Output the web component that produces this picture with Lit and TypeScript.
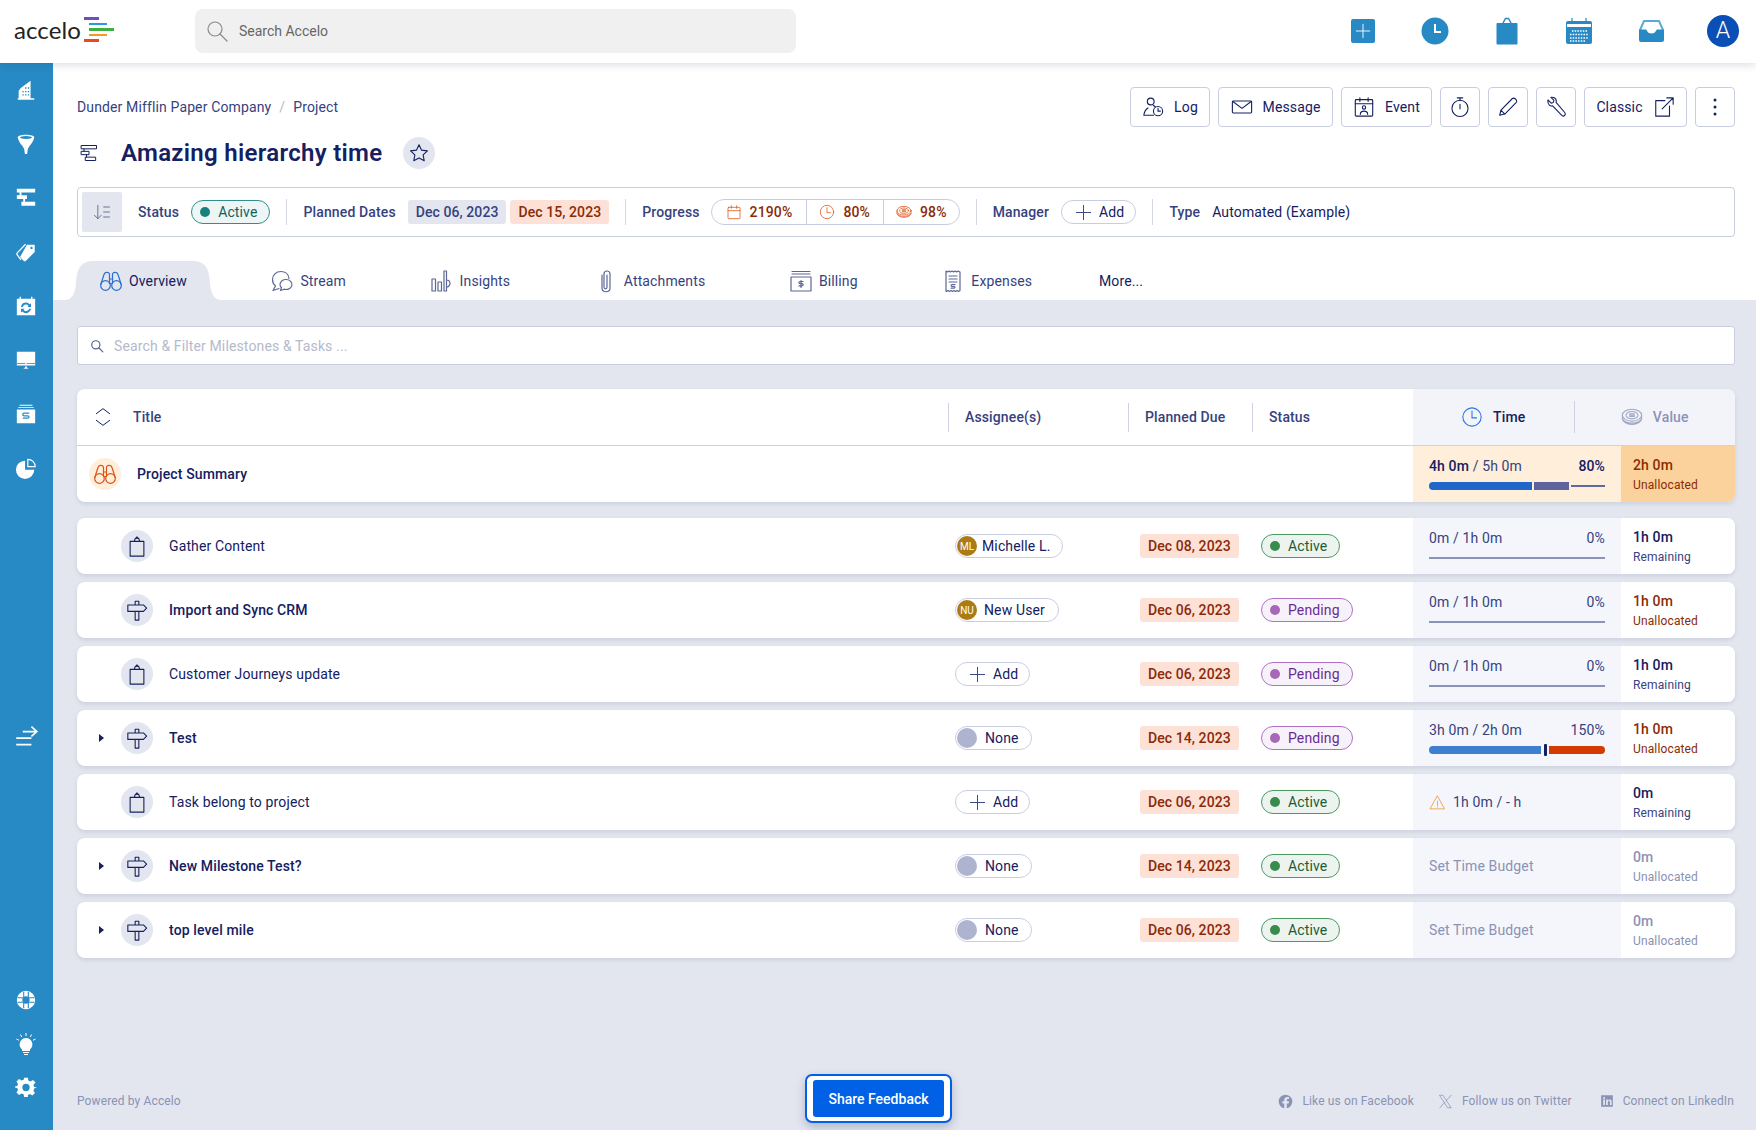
import { LitElement, html, css, svg } from "lit";
import { customElement } from "lit/decorators.js";

const ic = (body: unknown, size = 24, cls = "", w = size) =>
  html`<svg class="ic ${cls}" width="${w}" height="${size}" viewBox="0 0 24 24" fill="none" stroke="currentColor" stroke-width="1.2" stroke-linecap="round" stroke-linejoin="round">${body}</svg>`;
const fill = (body: unknown, size = 24) =>
  html`<svg class="ic" width="${size}" height="${size}" viewBox="0 0 24 24" fill="currentColor" stroke="none">${body}</svg>`;

const I = {
  binoc: svg`<circle cx="6.5" cy="16.5" r="4.8"/><circle cx="17.5" cy="16.5" r="4.8"/><path d="M1.8 15.5 5 5.5C5.6 3 9.5 2.5 10.5 5V14M22.200 15.500 19 5.500C18.400 3 14.500 2.500 13.500 5V14M10.500 10h3M10.500 14.500h3"/>`,
  task: svg`<path d="M4.500 7h15v16h-15zM9 7l1.200-3.500h3.600L15 7" /><path d="M11 3.500 12 2l1 1.500"/>`,
  ms: svg`<path d="M2 6.500h17l3.500 3.500-3.500 3.500H2zM10 6.500V2.500h4v4M10 13.500V23h4v-9.500"/>`,
  tree: svg`<path d="M3 3h18v4H3zM3 10h9v4H3zM8 17h12v4H8zM6 7v3M9 14v3"/>`,
  star: svg`<path d="m12 3 2.800 5.900 6.400.8-4.700 4.400 1.200 6.400L12 17.400 6.300 20.500l1.200-6.400L2.800 9.700l6.400-.8z"/>`,
  sort: svg`<path d="M7 4v16M3 16l4 4 4-4M14 6h7M14 12h7M14 18h7"/>`,
  cal: svg`<rect x="3" y="5" width="18" height="17" rx="1"/><path d="M3 10h18M8 2.500v4M16 2.500v4"/>`,
  clock: svg`<circle cx="12" cy="12" r="10"/><path d="M12 5.500V13h5"/>`,
  coins: svg`<ellipse cx="12" cy="10" rx="10.500" ry="6.500"/><ellipse cx="12" cy="10" rx="6.500" ry="4"/><path d="M1.500 10v3.500c0 3.500 4.500 6.500 10.500 6.500s10.500-3 10.500-6.500V10M1.800 14.500c1.500 2.500 5 4 10.200 4s8.700-1.500 10.200-4M14.500 8.500h-5v1.500h5v1.500h-5"/>`,
  plus: svg`<path d="M12 3v18M3 12h18"/>`,
  log: svg`<circle cx="9.500" cy="6" r="3.700"/><path d="M2 21c.5-4 2-6.500 4.500-8M2 21h10.500M12.500 10.500c1 .3 1.500.7 2 1.200"/><circle cx="17.500" cy="16.500" r="5"/><path d="M17.500 13.500v3h2.500"/>`,
  mail: svg`<rect x="1.500" y="5.500" width="21" height="13" rx="1"/><path d="m2 6 10 7.500L22 6"/>`,
  event: svg`<rect x="2.500" y="4" width="19" height="18" rx="1"/><path d="M2.500 8.500h19M7.500 2v4M16.500 2v4"/><circle cx="12" cy="12.500" r="1.800"/><path d="M8 20c0-2.500 1.500-3.500 4-3.500s4 1 4 3.500"/>`,
  timer: svg`<circle cx="12" cy="13.500" r="8.800"/><path d="M9 2h6M12 2v3M12 9v5"/>`,
  pencil: svg`<path d="M3 21l1.300-5.500L16.500 3c1-.9 2.300-.9 3.300 0l1 1c.9 1 .9 2.300 0 3.300L8.500 19.700zM4.300 15.500l4.200 4.200"/>`,
  wrench: svg`<path d="M3.500 4.500 6.800 7.800 9 7l.8-2.200L6.500 1.500C9 .8 11.800 2 12.300 5c.1.700 0 1.400-.2 2L21.500 18c1 1.200.9 2.300 0 3.200-.9.900-2.200.9-3.200-.1L8.300 10.700c-2.500.5-5.500-.3-5.200-6.200z"/>`,
  ext: svg`<path d="M13 5H3v17h15V11M10 14 22 2M15 2h7v7"/>`,
  stream: svg`<path d="M19 9.500C18.500 5 15 2.500 11 2.500 6 2.500 2.500 6 2.500 10.500c0 3 1.300 5.200 3 6.500L3 21.500l6-2"/><path d="M10 15.500a6 5 0 1 1 4 4.700L10.500 21.500l1-3c-1-.7-1.500-1.800-1.500-3z"/>`,
  insight: svg`<path d="M2 10h3.500v12H2zM8 13h3.500v9H8zM14 2h2.500v20H14zM16.500 11a3.500 3.500 0 1 1 0 7"/>`,
  clip: svg`<path d="M8 6v13c0 5 8 5 8 0V5c0-4-6-4-6 0v13c0 2.500 3 2.500 3 0V6"/>`,
  bill: svg`<path d="M3 2.500h18M3 5h18"/><rect x="2" y="8" width="20" height="14"/><path d="M14 12.500h-3a1 1 0 0 0 0 2.200h2a1 1 0 0 1 0 2.200h-3M12 11.500v7"/>`,
  exp: svg`<path d="M5 2l1.400 1L8 2l1.400 1L11 2l1.500 1L14 2l1.600 1L17 2l2 1v18.500l-1.500 1-1.500-1-1.500 1-1.500-1-1.500 1-1.500-1-1.500 1-1.500-1-1.500 1L5 22z"/><path d="M8 7h8M8 10h8M8 13h8M14 15.500h-3a.8.8 0 0 0 0 1.800h2a.8.8 0 0 1 0 1.800h-3"/>`,
  search: svg`<circle cx="10" cy="10" r="7"/><path d="m15 15 7 7"/>`,
  chev: svg`<path d="M4 8l8-6 8 6M4 16l8 6 8-6"/>`,
  warn: svg`<path d="M12 3 22 21H2z"/><path d="M12 10v6M12 18v.5"/>`,
};

const SB = {
  building: svg`<path d="M6 10 17 2v19H4V13zM3 21h18v1.500H3z"/><path fill="#278ac4" d="M8 13h1.500v1.500H8zM8 16.500h1.500V18H8zM11 9h1.500v1.500H11zM11 13h1.500v1.500H11zM11 16.500h1.500V18H11zM14 9h1.500v1.500H14zM14 13h1.500v1.500H14zM14 16.500h1.500V18H14z"/>`,
  funnel: svg`<path d="M3 5c0-2 4-3 9-3s9 1 9 3c0 1-2 6-5 9l-2 3.500-.8 5.500h-2.400L10 17.500 8 14C5 11 3 6 3 5z"/><ellipse cx="12" cy="5" rx="6.500" ry="1.600" fill="#278ac4"/>`,
  tree: svg`<path d="M2 2h20v4H2zM2 9h11v4H2zM7 16h15v4.500H7zM5 6h2v3H5zM9 13h2v3H9z"/>`,
  tag: svg`<path d="M13 4h8.500v8L12 21.500c-1 .8-2 .8-2.700 0L5.500 17.500z"/><path d="M11.500 3.500 2.500 13c-.6.700-.6 1.500 0 2.200l4 5.300" fill="none" stroke="#fff" stroke-width="1.400"/><circle cx="18" cy="7.500" r="1.300" fill="#278ac4"/>`,
  cal: svg`<path d="M2 4h3V2h1.500v2h11V2H19v2h3v18H2z"/><path d="M6.500 13a5.500 5.500 0 0 1 9.500-3l1.500-1v4h-4l1.300-1.200a3.600 3.600 0 0 0-6.300 1.200zM17.500 15a5.500 5.500 0 0 1-9.500 3l-1.500 1v-4h4l-1.300 1.200a3.600 3.600 0 0 0 6.300-1.200z" fill="#278ac4"/>`,
  screen: svg`<path d="M2 3h20v15H2zM8.500 21.500c2-.5 2.500-1 2.500-2.500h2c0 1.500.5 2 2.500 2.500z"/><rect x="2" y="15.500" width="20" height=".9" fill="#278ac4"/><rect x="11" y="15.500" width="2" height=".9"/>`,
  bill: svg`<path d="M5 2h14v1H5zM3.500 4.500h17v1h-17zM2 7h20v15H2z"/><path d="M15.500 11H10a1.300 1.300 0 0 0 0 3h4a1.200 1.200 0 0 1 0 2.500H8.500" stroke="#278ac4" stroke-width="1.400" fill="none"/>`,
  pie: svg`<path d="M11 4v10h10a10 10 0 1 1-10-10z"/><path d="M14 2.500a8 8 0 0 1 8 8h-8z" stroke="#fff" stroke-width="1.300" fill="#278ac4"/>`,
  expand: svg`<path d="M9 7h12M3 13h14M3 19h14M17 2.500 22 7l-5 4.500" fill="none" stroke="#fff" stroke-width="1.500"/>`,
  ring: svg`<path fill-rule="evenodd" d="M12 2a10 10 0 1 1 0 20 10 10 0 0 1 0-20zm0 6a4 4 0 1 0 0 8 4 4 0 0 0 0-8z"/><path d="M9.500 3v6M14.500 3v6M9.500 15v6M14.500 15v6M3 9.500h6M3 14.500h6M15 9.500h6M15 14.500h6" stroke="#278ac4" stroke-width="1.200"/>`,
  bulb: svg`<path d="M12 6a6.500 6.500 0 0 1 4 11.500V19H8v-1.500A6.500 6.500 0 0 1 12 6zM9 20h6v1H9zM10 22h4v1h-4z"/><path d="M12 1v3M6.500 2.500l1.200 2.500M17.500 2.500l-1.200 2.500M2.500 7l2.500 1.300M21.500 7 19 8.300" stroke="#fff" fill="none" stroke-width="1"/>`,
  gear: svg`<path fill-rule="evenodd" d="M10 2h4l.6 3 2.400 1 2.600-1.700 2.800 2.800L20 9.700l1 2.300 3 .6v0l-3 1-.9 2.400 1.700 2.600-2.800 2.800-2.600-1.700-2.400 1L14 23h-4l-.6-3-2.400-1-2.600 1.700-2.800-2.800L3.300 15.300 2.400 13 0 12.500v-1L2.400 11l.9-2.300L1.600 6.100l2.800-2.800L7 5l2.400-1zm2 6.500a4 4 0 1 0 0 8 4 4 0 0 0 0-8z"/>`,
};

type Row = {
  kind: "task" | "ms"; title: string; bold?: boolean; expand?: boolean;
  who: { t: "user" | "none" | "add"; init?: string; name?: string };
  due: string; status: "Active" | "Pending";
  time: "plain" | "over" | "warn" | "unset"; used?: string; pct?: string;
  val: string; label: string; tone: "" | "red" | "muted";
};

const rows: Row[] = [
  { kind: "task", title: "Gather Content", who: { t: "user", init: "ML", name: "Michelle L." }, due: "Dec 08, 2023", status: "Active", time: "plain", used: "0m / 1h 0m", pct: "0%", val: "1h 0m", label: "Remaining", tone: "" },
  { kind: "ms", title: "Import and Sync CRM", bold: true, who: { t: "user", init: "NU", name: "New User" }, due: "Dec 06, 2023", status: "Pending", time: "plain", used: "0m / 1h 0m", pct: "0%", val: "1h 0m", label: "Unallocated", tone: "red" },
  { kind: "task", title: "Customer Journeys update", who: { t: "add" }, due: "Dec 06, 2023", status: "Pending", time: "plain", used: "0m / 1h 0m", pct: "0%", val: "1h 0m", label: "Remaining", tone: "" },
  { kind: "ms", title: "Test", bold: true, expand: true, who: { t: "none" }, due: "Dec 14, 2023", status: "Pending", time: "over", used: "3h 0m / 2h 0m", pct: "150%", val: "1h 0m", label: "Unallocated", tone: "red" },
  { kind: "task", title: "Task belong to project", who: { t: "add" }, due: "Dec 06, 2023", status: "Active", time: "warn", val: "0m", label: "Remaining", tone: "" },
  { kind: "ms", title: "New Milestone Test?", bold: true, expand: true, who: { t: "none" }, due: "Dec 14, 2023", status: "Active", time: "unset", val: "0m", label: "Unallocated", tone: "muted" },
  { kind: "ms", title: "top level mile", bold: true, expand: true, who: { t: "none" }, due: "Dec 06, 2023", status: "Active", time: "unset", val: "0m", label: "Unallocated", tone: "muted" },
];

const tabs: [string, unknown][] = [
  ["Stream", I.stream], ["Insights", I.insight], ["Attachments", I.clip], ["Billing", I.bill], ["Expenses", I.exp],
];

@customElement("app-root")
export class AppRoot extends LitElement {
  static styles = css`
    :host { display: block; width: 1756px; height: 1130px; position: relative; overflow: hidden;
      font-family: Roboto, "Liberation Sans", sans-serif; font-size: 14px; letter-spacing: .13px; color: #14205f; background: #e3e6ef; }
    * { box-sizing: border-box; }
    .ic { display: block; flex: none; }
    .top { height: 63px; background: #fff; display: flex; align-items: center; position: relative; z-index: 2; box-shadow: 0 2px 8px rgba(40,50,90,.16); padding-bottom: 2px; }
    .logo { width: 195px; padding-left: 14px; display: flex; align-items: center; gap: 3px; height: 100%; }
    .logo b { font: 400 24px/1 Lato, sans-serif; letter-spacing: .1px; color: #222; padding-bottom: 1px; }
    .stripes { width: 31px; display: flex; flex-direction: column; gap: 3px; margin-top: -2px; }
    .stripes i { display: block; height: 2.500px; }
    .tsearch { width: 601px; height: 44px; background: #f0f0f0; border-radius: 8px; display: flex; align-items: center; padding-left: 10px; gap: 10px; color: #666; letter-spacing: 0; }
    .tsearch .ic { color: #8b8b8b; }
    .ticons { margin-left: auto; display: flex; align-items: center; color: #278ac4; padding-right: 17px; }
    .sq { width: 24px; height: 24px; background: #278ac4; border-radius: 2px; color: #fff; display: grid; place-items: center; }
    .ticons > :nth-child(1) { margin-right: 46px; }
    .ticons > :nth-child(2) { margin-right: 47px; }
    .ticons > :nth-child(3) { margin-right: 48px; }
    .ticons > :nth-child(4) { margin-right: 46px; }
    .ticons > :nth-child(5) { margin-right: 42px; }
    .ava { width: 32px; height: 32px; border-radius: 50%; background: #0a4fb5; color: #fff; display: grid; place-items: center; font-size: 23px; font-weight: 300; letter-spacing: 0; }
    .body { display: flex; height: 1067px; }
    .side { width: 53px; background: #278ac4; color: #fff; display: flex; flex-direction: column; align-items: center; flex: none; padding: 0 1px 21px 0; }
    .side .it { height: 54px; display: grid; place-items: center; flex: none; }
    .side .low { height: 43.500px; }
    .side .mid { margin-top: 215px; }
    .side .push { margin-top: auto; }
    .main { flex: 1; min-width: 0; display: flex; flex-direction: column; position: relative; }
    .head { background: #fff; padding: 24px 21px 0 24px; }
    .r1 { display: flex; align-items: center; height: 40px; }
    .crumb { color: #36427e; display: flex; gap: 8px; }
    .crumb s { text-decoration: none; color: #b5bacb; }
    .acts { margin-left: auto; display: flex; gap: 8px; }
    .btn { height: 40px; min-width: 40px; border: 1px solid #c9cde0; border-radius: 4px; display: flex; align-items: center; justify-content: center; gap: 10px; color: #14205f; background: #fff; }
    .btn.sq2 { width: 40px; }
    .btn.w-log { width: 80px; }
    .btn.w-msg { width: 115px; }
    .btn.w-evt { width: 91px; }
    .btn.w-cls { width: 103px; }
    .r2 { display: flex; align-items: center; height: 36px; margin-top: 8px; }
    .r2 .tree { margin: 0 22px 0 2px; }
    h1 { margin: 0; font: 600 24px/1 Roboto, sans-serif; letter-spacing: .3px; color: #14205f; }
    .starb { width: 32px; height: 32px; border-radius: 50%; background: #e3e6ef; display: grid; place-items: center; margin-left: 21px; }
    .info { margin-top: 16px; height: 50px; border: 1px solid #c9cde0; border-radius: 4px; display: flex; align-items: center; padding-left: 4px; color: #36427e; }
    .sortb { width: 40px; height: 40px; background: #e3e6ef; border-radius: 2px; display: grid; place-items: center; color: #6b7399; margin-right: 16px; }
    .sep { width: 1px; height: 26px; background: #d4d7e4; margin: 0 16px; flex: none; }
    .lab { font-weight: 500; color: #36427e; }
    .pill { height: 24px; border-radius: 12px; border: 1px solid #c9cde0; display: inline-flex; align-items: center; padding: 0 10px; color: #14205f; background: #fff; flex: none; }
    .dot { width: 10px; height: 10px; border-radius: 50%; flex: none; }
    .info .stat { margin-left: 12px; padding: 0 12px 0 8px; gap: 8px; background: #edf6f5; border-color: #2f8f8d; color: #14605f; }
    .info .stat .dot { background: #16807e; }
    .chip { height: 24px; border-radius: 3px; display: inline-flex; align-items: center; padding: 0 8px; flex: none; font-weight: 500; letter-spacing: .08px; }
    .chip.blue { background: #e3e6ef; color: #36427e; margin-left: 12px; }
    .chip.red { background: #fde0d6; color: #8a2b06; }
    .prog { margin-left: 11px; height: 26px; border: 1px solid #c9cde0; border-radius: 13px; display: flex; align-items: center; color: #8a2b06; font-weight: 500; }
    .prog div { display: flex; align-items: center; gap: 8px; height: 100%; padding: 0 13px 0 12px; border-left: 1px solid #c9cde0; color: #8a2b06; }
    .prog div:first-child { border-left: 0; padding: 0 14px; }
    .prog div:last-child { padding-right: 12px; }
    .prog .ic { color: #de5a1f; }
    .addp { gap: 6px; padding: 0 11px 0 12px; }
    .addp .ic { color: #36427e; }
    .tabs { display: flex; margin: 24px 0 0 -19px; height: 39px; align-items: stretch; }
    .tab { display: flex; align-items: center; gap: 6px; padding: 0 41.800px; position: relative; color: #36427e; }
    .tab > * { position: relative; }
    .tab .shape { position: absolute; left: 6px; bottom: 0; }
    .tab.on { color: #14205f; padding-left: 41px; }
    .tab.on .ic.bi { color: #2a6fd0; }
    .tab .ic { color: #5d6796; }
    .tab.more { padding-left: 25px; color: #14205f; }
    .gray { flex: 1; padding: 26px 21px 0 24px; display: flex; flex-direction: column; }
    .fsearch { height: 39px; background: #fff; border: 1px solid #c9cde0; border-radius: 3px; display: flex; align-items: center; padding-left: 12px; gap: 10px; color: #b5bacb; flex: none; }
    .fsearch .ic { color: #59648f; stroke-width: 2; }
    .card { background: #fff; border-radius: 8px; box-shadow: 0 2px 4px rgba(50,60,110,.13); overflow: hidden; display: grid; grid-template-columns: 871px 180px 124px 161px 208px 1fr; }
    .hd { margin-top: 24px; grid-template-rows: 57px 56px; flex: none; }
    .hd > .hc { border-bottom: 1px solid #cfd2e0; height: 57px; display: flex; align-items: center; font-weight: 500; color: #36427e; }
    .hc .in { height: 29px; display: flex; align-items: center; border-left: 1px solid #cfd2e0; padding-left: 16px; }
    .hc.ti { padding-left: 16px; gap: 20px; }
    .hc .ic { color: #14205f; }
    .tv { grid-column: 5 / 7; background: #f3f4f9; display: flex; }
    .tv > div { flex: 1; display: flex; align-items: center; justify-content: center; gap: 10px; }
    .tv .t { color: #14205f; }
    .tv .t .ic { color: #2a78e4; }
    .tv .v { color: #8b93b8; position: relative; border-left: 1px solid #cfd2e0; height: 32px; align-self: center; }
    .tv .v .ic { color: #a0a7c4; }
    .sum { grid-column: 1 / 5; display: flex; align-items: center; padding-left: 12px; gap: 16px; font-weight: 500; height: 56px; }
    .circ { width: 32px; height: 32px; border-radius: 50%; display: grid; place-items: center; background: #e3e6ef; flex: none; }
    .sum .circ { background: #ffeeda; color: #d9541a; }
    .row { margin-top: 8px; height: 56px; flex: none; }
    .row.first { margin-top: 16px; }
    .ttl { display: flex; align-items: center; padding-left: 44px; gap: 16px; position: relative; }
    .ttl.b { font-weight: 500; }
    .car { position: absolute; left: 22px; top: 24px; width: 0; height: 0; border-left: 5px solid #14205f; border-top: 4px solid transparent; border-bottom: 4px solid transparent; }
    .c { display: flex; align-items: center; }
    .c.a { padding-left: 7px; }
    .c.d { padding-left: 12px; }
    .c.s { padding-left: 9px; }
    .who { gap: 5px; padding: 0 12px 0 1px; }
    .who.NU { gap: 7px; padding-right: 13px; }
    .who.nm { gap: 8px; padding-right: 12px; }
    .av { width: 20px; height: 20px; border-radius: 50%; background: #ac7c14; color: #fff; font-size: 10px; letter-spacing: 0; display: grid; place-items: center; }
    .av.n { background: #aeb3cf; }
    .st { padding: 0 12px 0 8px; gap: 8px; }
    .st.Active { border-color: #4a9a62; background: #edf4ef; color: #1d5c2f; }
    .st.Active .dot { background: #3a8a4e; }
    .st.Pending { border-color: #b070c4; background: #f7f1f9; color: #6a2c91; }
    .st.Pending .dot { background: #a868b8; }
    .tm { background: #f5f6fb; padding: 12px 16px 0; color: #36427e; }
    .tm.sm { background: #ffeeda; }
    .tl { display: flex; justify-content: space-between; line-height: 16px; }
    .tl b { font-weight: 500; color: #14205f; }
    .bar { margin-top: 8px; height: 8px; display: flex; align-items: center; }
    .line { height: 2px; width: 100%; background: #8a93b8; }
    .warnc, .unset { display: flex; align-items: center; padding-top: 0; }
    .warnc { gap: 7px; }
    .warnc .ic { color: #ee9a3a; }
    .unset { color: #8a92b5; }
    .val { padding: 11px 0 0 12px; line-height: 16px; color: #14205f; background: #fff; }
    .val strong { font-weight: 500; display: block; }
    .val span { display: block; margin-top: 4px; font-size: 12px; color: #36427e; letter-spacing: .14px; }
    .val.red strong, .val.red span { color: #8a2b06; }
    .val.muted strong, .val.muted span { color: #8a92b5; }
    .val.sm { background: #fbd29b; }
    .foot { margin-top: auto; height: 62px; flex: none; display: flex; align-items: center; font-size: 12px; color: #8a92b5; padding-top: 4px; }
    .foot .rt { margin-left: auto; display: flex; gap: 28px; padding-right: 1px; }
    .foot .rt div { display: flex; align-items: center; gap: 9px; }
    .foot .rt div:first-child { margin-right: -4px; }
    .share { position: absolute; left: 805px; bottom: 7px; width: 147px; height: 49px; border: 2px solid #0060e6; border-radius: 7px; background: #fff; padding: 4px 6px; box-shadow: 0 4px 10px rgba(30,40,80,.25); z-index: 3; }
    .share div { height: 100%; background: #0060e6; color: #fff; border-radius: 3px; display: grid; place-items: center; font-weight: 500; letter-spacing: 0; }
  `;

  private who(r: Row) {
    if (r.who.t === "user") return html`<span class="pill who ${r.who.init}"><span class="av">${r.who.init}</span>${r.who.name}</span>`;
    if (r.who.t === "none") return html`<span class="pill who nm"><span class="av n"></span>None</span>`;
    return html`<span class="pill addp">${ic(I.plus, 19)}Add</span>`;
  }

  private time(r: Row) {
    if (r.time === "warn") return html`<div class="tm warnc">${ic(I.warn, 17)}<span>1h 0m / - h</span></div>`;
    if (r.time === "unset") return html`<div class="tm unset">Set Time Budget</div>`;
    const over = r.time === "over";
    const [a, b] = (r.used as string).split(" / ");
    return html`<div class="tm">
      <div class="tl"><span>${a} / ${b}</span><span>${r.pct}</span></div>
      <div class="bar">
        ${over
          ? html`<div class="seg" style="width:112px;height:8px;background:#3f7fd0;border-radius:4px 0 0 4px"></div>
              <div class="seg" style="width:3px;height:12px;background:#14205f;margin:0 2px 0 3px;border-radius:1px"></div>
              <div class="seg" style="flex:1;height:8px;background:#d43b00;border-radius:0 4px 4px 0"></div>`
          : html`<div class="line"></div>`}
      </div>
    </div>`;
  }

  render() {
    const C = "#278ac4";
    return html`
      <div class="top">
        <div class="logo"><b>accelo</b>
          <div class="stripes">
            <i style="background:#6a4fc0;width:15px"></i>
            <i style="background:#2a9ad6;width:18px;margin-left:5px"></i>
            <i style="background:#3cb043;width:25px;margin-left:5px"></i>
            <i style="background:#f79a1c;width:18px;margin-left:5px"></i>
            <i style="background:#ea4a1e;width:15px"></i>
          </div>
        </div>
        <div class="tsearch">${ic(I.search, 24)}<span>Search Accelo</span></div>
        <div class="ticons">
          <div class="sq">${ic(I.plus, 18)}</div>
          ${html`<svg class="ic" width="28" height="28" viewBox="0 0 28 28"><circle cx="14" cy="14" r="13.500" fill="${C}"/><path d="M14 7v8h6" fill="none" stroke="#fff" stroke-width="2"/></svg>`}
          ${html`<svg class="ic" width="22" height="28" viewBox="0 0 22 28"><path d="M1.500 6H20.500a1 1 0 0 1 1 1V26.500a1 1 0 0 1-1 1H1.500a1 1 0 0 1-1-1V7a1 1 0 0 1 1-1z" fill="${C}"/><path d="M7 6 9.500 1.500h3L15 6" fill="none" stroke="${C}" stroke-width="1.500"/></svg>`}
          ${html`<svg class="ic" width="26" height="26" viewBox="0 0 26 26"><path d="M2 3h22a2 2 0 0 1 2 2v19a2 2 0 0 1-2 2H2a2 2 0 0 1-2-2V5a2 2 0 0 1 2-2z" fill="${C}"/><rect x="1" y="6" width="24" height="3" fill="#fff"/><path d="M6 0v6M20 0v6" stroke="${C}" stroke-width="1.200"/><path d="M6 13h16M4 16.500h18M4 20h18M4 23h16" stroke="#fff" stroke-width="1.400" stroke-dasharray="1.500 1.200"/></svg>`}
          ${html`<svg class="ic" width="27" height="23" viewBox="0 0 27 23"><path d="M2 11 6 2h15l4 9" fill="none" stroke="#5aaad8" stroke-width="2"/><path d="M1 10.500h7c1 0 1 4 5.500 4s4.500-4 5.500-4h7V21a2 2 0 0 1-2 2H3a2 2 0 0 1-2-2z" fill="${C}"/></svg>`}
          <div class="ava">A</div>
        </div>
      </div>
      <div class="body">
        <nav class="side">
          ${[SB.building, SB.funnel, SB.tree, SB.tag, SB.cal, SB.screen, SB.bill, SB.pie].map((s) => html`<div class="it">${fill(s, 22)}</div>`)}
          <div class="it mid">${fill(SB.expand, 26)}</div>
          <div class="it low push">${fill(SB.ring, 22)}</div>
          <div class="it low">${fill(SB.bulb, 24)}</div>
          <div class="it low">${fill(SB.gear, 22)}</div>
        </nav>
        <div class="main">
          <div class="head">
            <div class="r1">
              <div class="crumb"><span>Dunder Mifflin Paper Company</span><s>/</s><span>Project</span></div>
              <div class="acts">
                <div class="btn w-log">${ic(I.log, 22)}Log</div>
                <div class="btn w-msg">${ic(I.mail, 22)}Message</div>
                <div class="btn w-evt">${ic(I.event, 22)}Event</div>
                <div class="btn sq2">${ic(I.timer, 22)}</div>
                <div class="btn sq2">${ic(I.pencil, 22)}</div>
                <div class="btn sq2">${ic(I.wrench, 22)}</div>
                <div class="btn w-cls">Classic ${ic(I.ext, 22)}</div>
                <div class="btn sq2">${fill(svg`<circle cx="12" cy="5" r="1.500"/><circle cx="12" cy="12" r="1.500"/><circle cx="12" cy="19" r="1.500"/>`, 24)}</div>
              </div>
            </div>
            <div class="r2">
              <span class="tree">${ic(I.tree, 20)}</span>
              <h1>Amazing hierarchy time</h1>
              <span class="starb">${ic(I.star, 22)}</span>
            </div>
            <div class="info">
              <div class="sortb">${ic(I.sort, 20)}</div>
              <span class="lab">Status</span>
              <span class="pill stat"><i class="dot"></i>Active</span>
              <i class="sep"></i>
              <span class="lab">Planned Dates</span>
              <span class="chip blue">Dec 06, 2023</span>
              <span class="chip red" style="margin-left:4px">Dec 15, 2023</span>
              <i class="sep"></i>
              <span class="lab">Progress</span>
              <div class="prog">
                <div>${ic(I.cal, 16)}2190%</div>
                <div>${ic(I.clock, 16)}80%</div>
                <div>${ic(I.coins, 16)}98%</div>
              </div>
              <i class="sep"></i>
              <span class="lab">Manager</span>
              <span class="pill addp" style="margin-left:12px">${ic(I.plus, 19)}Add</span>
              <i class="sep"></i>
              <span class="lab">Type</span>
              <span style="margin-left:12px;color:#14205f">Automated (Example)</span>
            </div>
            <div class="tabs">
              <div class="tab on">
                <svg class="shape" width="158" height="39" viewBox="0 0 158 39"><path d="M0 39C8 39 11 33 12 22 13 8 16 0 30 0H128C142 0 145 8 146 22 147 33 150 39 158 39Z" fill="#e3e6ef"/></svg>
                ${ic(I.binoc, 24, "bi")}<span>Overview</span>
              </div>
              ${tabs.map(([t, i]) => html`<div class="tab">${ic(i, 24)}<span>${t}</span></div>`)}
              <div class="tab more"><span>More...</span></div>
            </div>
          </div>
          <div class="gray">
            <div class="fsearch">${ic(I.search, 14)}<span>Search &amp; Filter Milestones &amp; Tasks ...</span></div>
            <div class="card hd">
              <div class="hc ti">${ic(I.chev, 20)}<span>Title</span></div>
              <div class="hc"><div class="in">Assignee(s)</div></div>
              <div class="hc"><div class="in">Planned Due</div></div>
              <div class="hc"><div class="in">Status</div></div>
              <div class="hc tv">
                <div class="t">${ic(I.clock, 22)}Time</div>
                <div class="v">${ic(I.coins, 22)}Value</div>
              </div>
              <div class="sum"><span class="circ">${ic(I.binoc, 24)}</span>Project Summary</div>
              <div class="tm sm">
                <div class="tl"><span><b>4h 0m</b> / 5h 0m</span><b>80%</b></div>
                <div class="bar">
                  <div style="width:103px;height:8px;background:#2066c8;border-radius:4px 0 0 4px"></div>
                  <div style="width:35px;height:8px;background:#5c639f;margin-left:2px"></div>
                  <div style="flex:1;height:2px;background:#5c6aa0;margin-left:2px"></div>
                </div>
              </div>
              <div class="val sm red"><strong>2h 0m</strong><span>Unallocated</span></div>
            </div>
            ${rows.map(
              (r, i) => html`<div class="card row ${i === 0 ? "first" : ""}">
                <div class="ttl ${r.bold ? "b" : ""}">
                  ${r.expand ? html`<i class="car"></i>` : ""}
                  <span class="circ">${ic(r.kind === "task" ? I.task : I.ms, 22)}</span>${r.title}
                </div>
                <div class="c a">${this.who(r)}</div>
                <div class="c d"><span class="chip red">${r.due}</span></div>
                <div class="c s"><span class="pill st ${r.status}"><i class="dot"></i>${r.status}</span></div>
                ${this.time(r)}
                <div class="val ${r.tone}"><strong>${r.val}</strong><span>${r.label}</span></div>
              </div>`
            )}
            <div class="foot">
              <span>Powered by Accelo</span>
              <div class="rt">
                <div>${fill(svg`<path fill-rule="evenodd" d="M12 1a11 11 0 0 1 2 21.800V15h3l.5-3.500H14V10c0-1 .5-2 2-2h1.700V5s-1.500-.3-3-.3C12 4.700 10 6.500 10 9.500v2H7V15h3v7.800A11 11 0 0 1 12 1z"/>`, 15)}Like us on Facebook</div>
                <div>${ic(svg`<path d="M3 2h5l13 20h-5zM21 2l-8 9M3 22l8-9"/>`, 15)}Follow us on Twitter</div>
                <div>${fill(svg`<path fill-rule="evenodd" d="M2 2h20v20H2zm3.500 7.500V19h3V9.500zM7 5a1.700 1.700 0 1 0 0 3.400A1.700 1.700 0 0 0 7 5zm3.500 4.500V19h3v-5c0-3 3.500-3 3.500 0v5h3v-6c0-4.500-5-4.500-6.500-2V9.500z"/>`, 14)}Connect on LinkedIn</div>
              </div>
            </div>
          </div>
        </div>
      </div>
      <div class="share"><div>Share Feedback</div></div>
    `;
  }
}
